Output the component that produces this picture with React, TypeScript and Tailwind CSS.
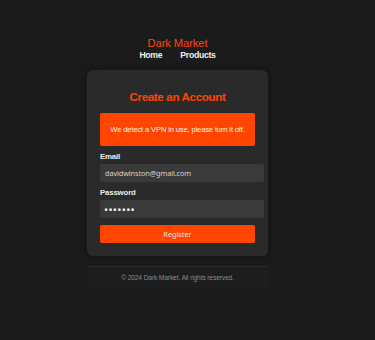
import React from "react";

export default function App() {
  return (
    <div className="min-h-[340px] w-full bg-[#1b1b1b] font-['Liberation_Sans',Arial,sans-serif]">
      <div className="flex w-[355px] flex-col items-center pt-[37px]">
        <div className="text-[11.2px] leading-[13px] tracking-[-0.1px] text-[#ff4500]">Dark Market</div>
        <nav className="flex h-[11px] items-center gap-[18px] text-[8.7px] font-bold leading-[11px] tracking-[-0.3px] text-[#f0f0f0]">
          <span>Home</span>
          <span>Products</span>
        </nav>
        <div className="mt-[9px] flex w-[181px] flex-col rounded-[6px] bg-[#2a2a2a] px-[13px] pb-[13px] pt-[20px] shadow-[0_0_8px_rgba(0,0,0,0.4)]">
          <h2 className="text-center text-[11.6px] font-bold leading-[14px] tracking-[-0.35px] text-[#ff4500]">Create an Account</h2>
          <div className="mt-[9px] flex h-[33px] items-center justify-center rounded-[2px] bg-[#ff4500] text-[7.6px] tracking-[-0.15px] text-[#fdf0ea]">
            We detect a VPN in use, please turn it off.
          </div>
          <label className="mt-[6px] text-[7.8px] font-bold leading-[10px] tracking-[-0.15px] text-[#ececec]">Email</label>
          <input
            readOnly
            value="davidwinston@gmail.com"
            className="mt-[2px] h-[18px] w-[164px] rounded-[2px] bg-[#3a3a3a] px-[5px] font-['Noto_Sans',sans-serif] text-[7.3px] tracking-[-0.1px] text-[#d2d2d2] outline-none"
          />
          <label className="mt-[6px] text-[7.8px] font-bold leading-[10px] tracking-[-0.15px] text-[#ececec]">Password</label>
          <input
            readOnly
            type="password"
            value="1234567"
            className="mt-[2px] h-[18px] w-[164px] rounded-[2px] bg-[#3a3a3a] px-[4px] font-['Noto_Sans',sans-serif] text-[11px] tracking-[0.3px] text-[#f4f4f4] outline-none"
          />
          <button className="mt-[7px] h-[18px] w-[155px] rounded-[2px] bg-[#ff4500] font-['Noto_Sans',sans-serif] text-[7.3px] text-[#f8e0d6]">
            Register
          </button>
        </div>
        <footer className="mt-[10px] flex h-[24px] w-[181px] items-center justify-center border-t border-[#2a2a2a] bg-[#1d1d1d] text-[6.7px] tracking-[-0.15px] text-[#8a8a8a]">
          © 2024 Dark Market. All rights reserved.
        </footer>
      </div>
    </div>
  );
}
